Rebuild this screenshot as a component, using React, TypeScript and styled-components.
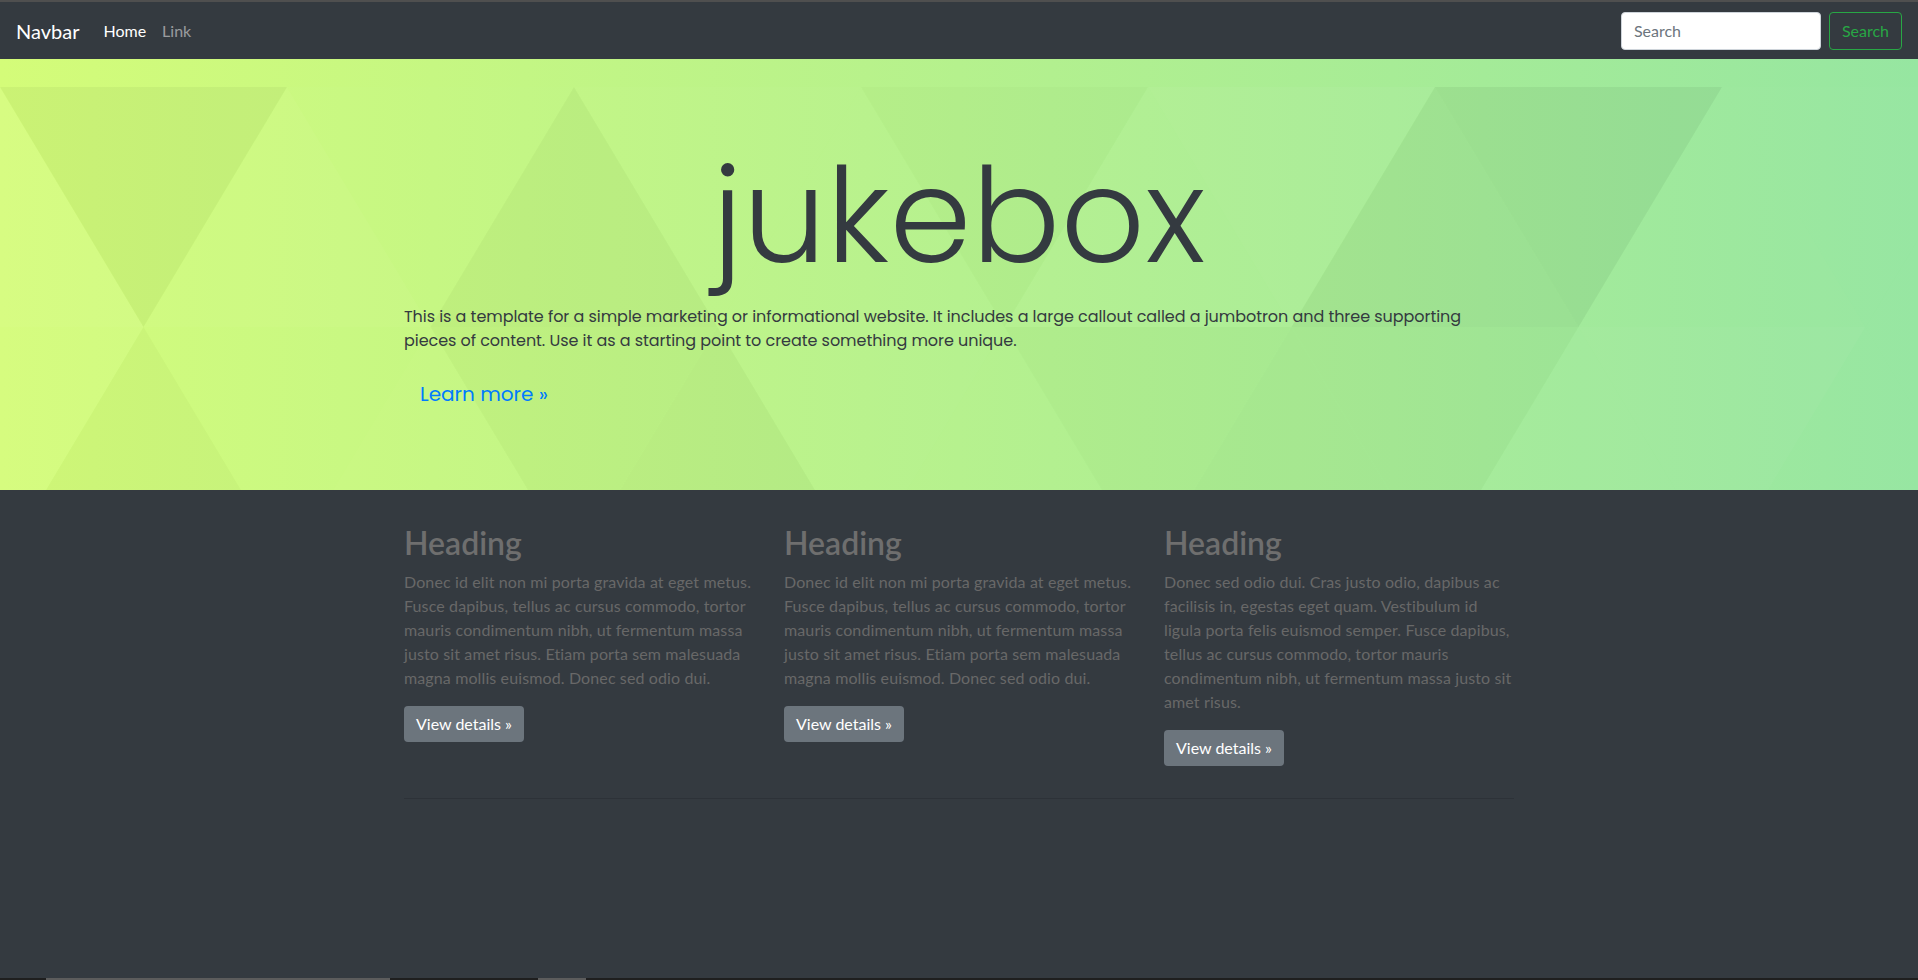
import styled, { createGlobalStyle } from 'styled-components'

const GlobalStyle = createGlobalStyle`
  html, body {
    margin: 0;
    padding: 0;
    background: #343a40;
  }
  * {
    box-sizing: border-box;
  }
`

const uiFont = `'Segoe UI', Lato, 'Liberation Sans', sans-serif`
const geoFont = `Poppins, Inter, 'Liberation Sans', sans-serif`

const Page = styled.div`
  display: flex;
  flex-direction: column;
  height: 980px;
  font-family: ${uiFont};
`

const TopStrip = styled.div`
  height: 2px;
  background: #4f4f4f;
`

const Navbar = styled.nav`
  display: flex;
  align-items: center;
  height: 57px;
  padding: 0 16px;
  background: #343a40;
`

const Brand = styled.a`
  margin-right: 16px;
  font-size: 20px;
  line-height: 30px;
  color: #fff;
  text-decoration: none;
`

const NavLink = styled.a<{ $active?: boolean }>`
  padding: 8px;
  font-size: 16px;
  line-height: 24px;
  color: ${({ $active }) => ($active ? '#fff' : 'rgba(255, 255, 255, 0.5)')};
  text-decoration: none;
`

const SearchForm = styled.form`
  display: flex;
  gap: 8px;
  margin-left: auto;
`

const SearchInput = styled.input`
  width: 200px;
  height: 38px;
  padding: 6px 12px;
  border: 1px solid #ced4da;
  border-radius: 4px;
  font-family: ${uiFont};
  font-size: 16px;
  color: #495057;
  background: #fff;
  &::placeholder {
    color: #6c757d;
  }
`

const OutlineButton = styled.button`
  height: 38px;
  padding: 6px 12px;
  border: 1px solid #28a745;
  border-radius: 4px;
  background: transparent;
  font-family: ${uiFont};
  font-size: 16px;
  color: #28a745;
`

const Jumbotron = styled.section`
  position: relative;
  height: 431px;
  overflow: hidden;
  background: linear-gradient(to right, #d4fc79, #96e6a1);
`

const Pattern = styled.svg`
  position: absolute;
  inset: 0;
  width: 100%;
  height: 100%;
`

const Container = styled.div`
  position: relative;
  width: 1110px;
  margin: 0 auto;
`

const Title = styled.h1`
  margin: 0;
  padding-top: 92px;
  font-family: ${geoFont};
  font-size: 131px;
  font-weight: 300;
  line-height: 1;
  letter-spacing: 0.5px;
  text-align: center;
  color: #343a40;
`

const Lead = styled.p`
  margin: 23px 0 18px;
  font-family: ${geoFont};
  font-size: 16px;
  line-height: 24px;
  letter-spacing: -0.05px;
  color: #343a40;
`

const LearnMore = styled.a`
  display: inline-block;
  padding: 8px 16px;
  font-family: ${geoFont};
  font-size: 20px;
  line-height: 30px;
  color: #007bff;
  text-decoration: none;
`

const Main = styled.main`
  flex: 1;
  padding-top: 34px;
  background: #343a40;
`

const Columns = styled.div`
  display: grid;
  grid-template-columns: repeat(3, 1fr);
  gap: 30px;
`

const Column = styled.div`
  display: flex;
  flex-direction: column;
  align-items: flex-start;
`

const Heading = styled.h2`
  margin: 0 0 8px;
  font-size: 32px;
  font-weight: 600;
  line-height: 1.2;
  color: #6e6e6e;
`

const Text = styled.p`
  margin: 0 0 16px;
  font-size: 16px;
  line-height: 24px;
  letter-spacing: 0.12px;
  color: #686868;
`

const DetailsButton = styled.a`
  display: inline-block;
  margin-bottom: 16px;
  padding: 6px 12px;
  border-radius: 4px;
  background: #6c757d;
  font-size: 16px;
  line-height: 24px;
  color: #fff;
  text-decoration: none;
`

const Rule = styled.hr`
  margin: 16px 0 0;
  border: 0;
  border-top: 1px solid rgba(0, 0, 0, 0.12);
`

const ScrollStrip = styled.div`
  display: grid;
  grid-template-columns: 46px 344px 148px 48px 1fr;
  height: 2px;
  background: #1f1f1f;
`

const ScrollThumb = styled.div<{ $col: number }>`
  grid-column: ${({ $col }) => $col};
  background: #5c5c5c;
`

// triangle lattice shading: w = white, b = black, number = opacity
const P = 287
const H = 240
const Y0 = 28

const upperUp = ['w.07', 'w.04', 'b.03', 'w.02', 'w.03', 'b.04', 'w.02', 'w.01']
const upperDown = ['b.04', 'w.015', 'w.025', 'b.015', 'w.04', 'b.05', 'w.015']
const lowerUp = ['b.025', 'w.025', 'b.03', 'w.015', 'b.025', 'w.03', 'w.015']
const lowerDown = ['w.05', 'w.015', 'b.025', 'w.025', 'b.015', 'b.025', 'w.04', 'w.015']

function fillOf(shade: string) {
  return shade[0] === 'w' ? '#ffffff' : '#000000'
}

function opacityOf(shade: string) {
  return Number(shade.slice(1))
}

function Triangles() {
  const tris: { points: string; shade: string }[] = []
  const y1 = Y0 + H
  const y2 = Y0 + 2 * H
  upperUp.forEach((shade, k) => {
    const x = k * P
    tris.push({ points: `${x},${Y0} ${x - P / 2},${y1} ${x + P / 2},${y1}`, shade })
  })
  upperDown.forEach((shade, k) => {
    const x = k * P
    tris.push({ points: `${x},${Y0} ${x + P},${Y0} ${x + P / 2},${y1}`, shade })
  })
  lowerUp.forEach((shade, k) => {
    const x = k * P
    tris.push({ points: `${x + P / 2},${y1} ${x},${y2} ${x + P},${y2}`, shade })
  })
  lowerDown.forEach((shade, k) => {
    const x = k * P
    tris.push({ points: `${x - P / 2},${y1} ${x + P / 2},${y1} ${x},${y2}`, shade })
  })
  return (
    <Pattern viewBox="0 0 1918 431" preserveAspectRatio="xMinYMin slice">
      {tris.map((t, i) => (
        <polygon key={i} points={t.points} fill={fillOf(t.shade)} fillOpacity={opacityOf(t.shade)} />
      ))}
    </Pattern>
  )
}

const columns = [
  'Donec id elit non mi porta gravida at eget metus. Fusce dapibus, tellus ac cursus commodo, tortor mauris condimentum nibh, ut fermentum massa justo sit amet risus. Etiam porta sem malesuada magna mollis euismod. Donec sed odio dui.',
  'Donec id elit non mi porta gravida at eget metus. Fusce dapibus, tellus ac cursus commodo, tortor mauris condimentum nibh, ut fermentum massa justo sit amet risus. Etiam porta sem malesuada magna mollis euismod. Donec sed odio dui.',
  'Donec sed odio dui. Cras justo odio, dapibus ac facilisis in, egestas eget quam. Vestibulum id ligula porta felis euismod semper. Fusce dapibus, tellus ac cursus commodo, tortor mauris condimentum nibh, ut fermentum massa justo sit amet risus.',
]

export default function App() {
  return (
    <Page>
      <GlobalStyle />
      <TopStrip />
      <Navbar>
        <Brand href="#">Navbar</Brand>
        <NavLink href="#" $active>
          Home
        </NavLink>
        <NavLink href="#">Link</NavLink>
        <SearchForm onSubmit={(e) => e.preventDefault()}>
          <SearchInput type="search" placeholder="Search" aria-label="Search" />
          <OutlineButton type="submit">Search</OutlineButton>
        </SearchForm>
      </Navbar>
      <Jumbotron>
        <Triangles />
        <Container>
          <Title>jukebox</Title>
          <Lead>
            This is a template for a simple marketing or informational website. It includes a large callout called a
            jumbotron and three supporting pieces of content. Use it as a starting point to create something more
            unique.
          </Lead>
          <LearnMore href="#">Learn more »</LearnMore>
        </Container>
      </Jumbotron>
      <Main>
        <Container>
          <Columns>
            {columns.map((text, i) => (
              <Column key={i}>
                <Heading>Heading</Heading>
                <Text>{text}</Text>
                <DetailsButton href="#">View details »</DetailsButton>
              </Column>
            ))}
          </Columns>
          <Rule />
        </Container>
      </Main>
      <ScrollStrip>
        <ScrollThumb $col={2} />
        <ScrollThumb $col={4} />
      </ScrollStrip>
    </Page>
  )
}
